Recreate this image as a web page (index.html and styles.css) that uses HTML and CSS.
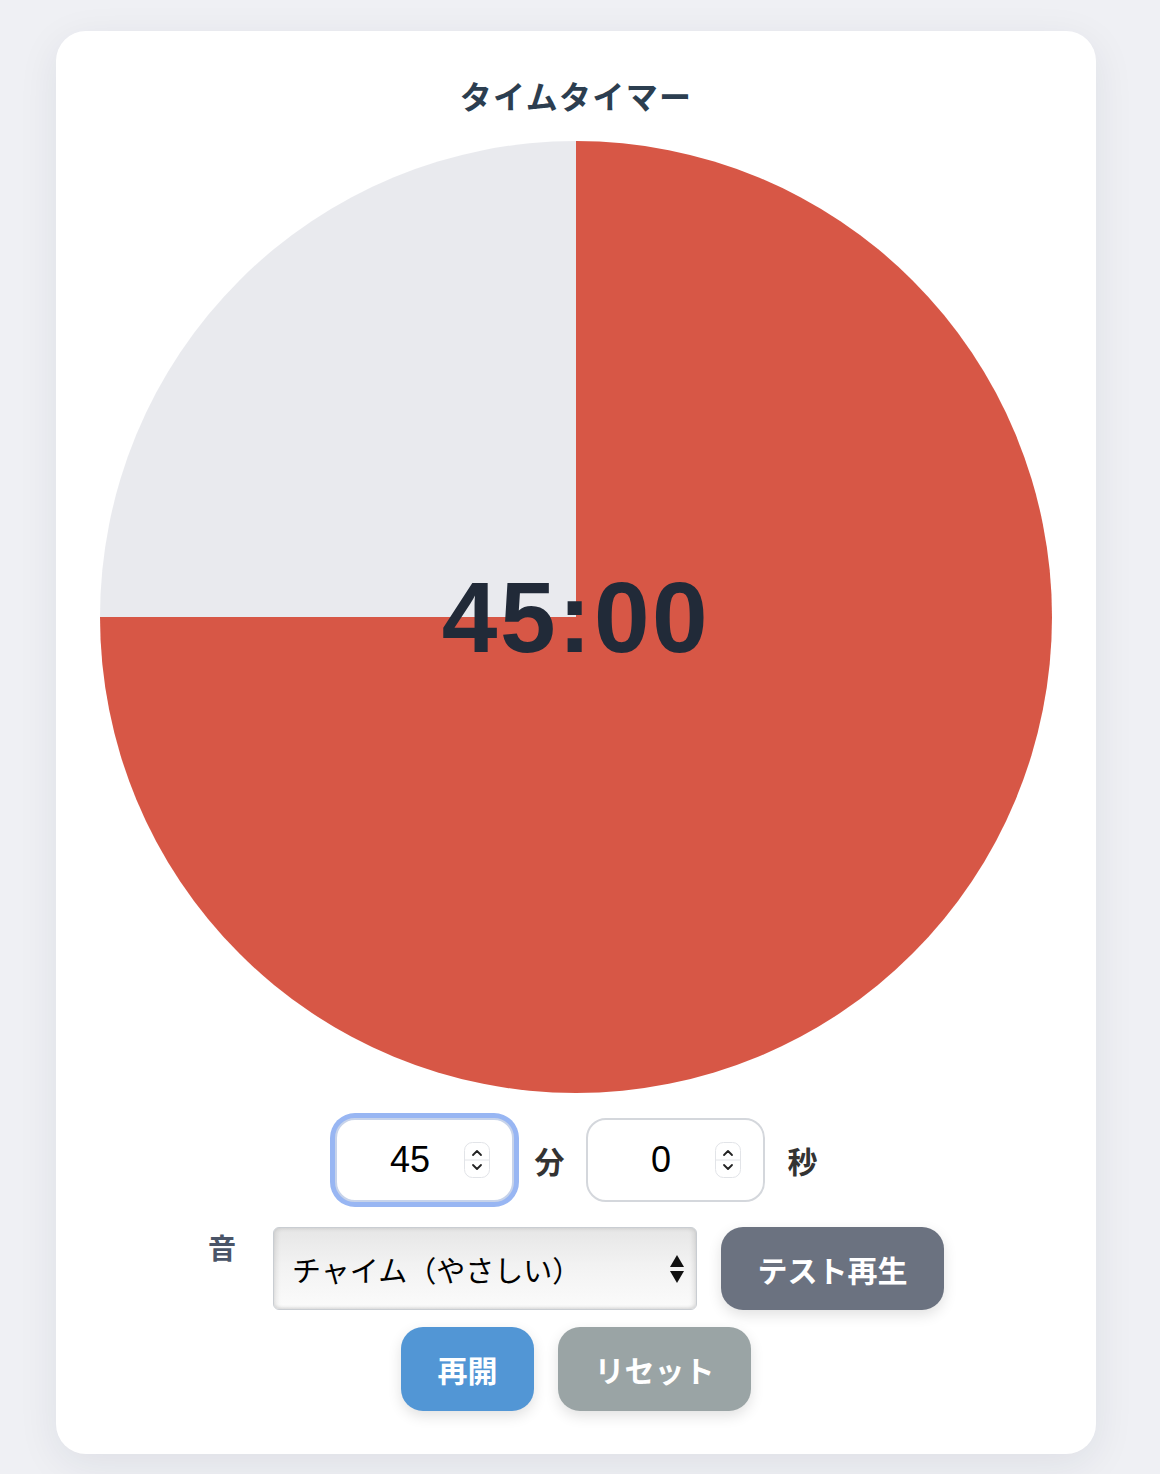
FILE: index.html
```html
<!DOCTYPE html>
<html lang="ja">
<head>
    <meta charset="UTF-8">
    <meta name="viewport" content="width=device-width, initial-scale=1.0">
    <title>タイムタイマー</title>
    <link rel="stylesheet" href="styles.css">
</head>
<body>
    <div class="card">
        <h1 class="title">タイムタイマー</h1>

        <div class="dial">
            <span class="time">45:00</span>
        </div>

        <div class="time-row">
            <span class="num-wrap">
                <input type="number" class="num focused" value="45" min="0" max="60">
                <svg class="spin" width="26" height="36" viewBox="0 0 26 36">
                    <rect x="0.5" y="0.5" width="25" height="35" rx="8" fill="#fff" stroke="#e2e4e8"/>
                    <line x1="1" y1="18" x2="25" y2="18" stroke="#e2e4e8"/>
                    <path d="M9 13 L13 9 L17 13" fill="none" stroke="#222" stroke-width="1.8" stroke-linecap="round" stroke-linejoin="round"/>
                    <path d="M9 23 L13 27 L17 23" fill="none" stroke="#222" stroke-width="1.8" stroke-linecap="round" stroke-linejoin="round"/>
                </svg>
            </span>
            <span class="unit">分</span>
            <span class="num-wrap">
                <input type="number" class="num" value="0" min="0" max="59">
                <svg class="spin" width="26" height="36" viewBox="0 0 26 36">
                    <rect x="0.5" y="0.5" width="25" height="35" rx="8" fill="#fff" stroke="#e2e4e8"/>
                    <line x1="1" y1="18" x2="25" y2="18" stroke="#e2e4e8"/>
                    <path d="M9 13 L13 9 L17 13" fill="none" stroke="#222" stroke-width="1.8" stroke-linecap="round" stroke-linejoin="round"/>
                    <path d="M9 23 L13 27 L17 23" fill="none" stroke="#222" stroke-width="1.8" stroke-linecap="round" stroke-linejoin="round"/>
                </svg>
            </span>
            <span class="unit unit-sec">秒</span>
        </div>

        <div class="sound-row">
            <label class="sound-label" for="sound">音</label>
            <span class="select-wrap">
                <select id="sound" class="sound-select">
                    <option>チャイム（やさしい）</option>
                    <option>ベル</option>
                    <option>アラーム</option>
                </select>
                <svg class="select-arrows" width="16" height="30" viewBox="0 0 16 30">
                    <path d="M8 1 L15 13 L1 13 Z" fill="#111"/>
                    <path d="M1 17 L15 17 L8 29 Z" fill="#111"/>
                </svg>
            </span>
            <button class="btn btn-test">テスト再生</button>
        </div>

        <div class="control-row">
            <button class="btn btn-start">再開</button>
            <button class="btn btn-reset">リセット</button>
        </div>
    </div>
</body>
</html>
```

FILE: styles.css
```css
body {
    font-family: "Noto Sans CJK JP", "Liberation Sans", sans-serif;
    background-color: #eff0f4;
    margin: 0;
    padding: 31px 0 20px;
}

.card {
    width: 1040px;
    box-sizing: border-box;
    margin-left: 56px;
    padding: 42px 44px 43px;
    background-color: #ffffff;
    border-radius: 30px;
    box-shadow: 0 10px 40px rgba(30, 40, 70, 0.08);
}

.title {
    margin: 0 0 24px;
    font-size: 32px;
    line-height: 44px;
    font-weight: 700;
    color: #2c3e50;
    text-align: center;
    letter-spacing: 1.3px;
}

.dial {
    width: 952px;
    height: 952px;
    border-radius: 50%;
    background: conic-gradient(#d75746 0 75%, #e9eaee 75% 100%);
    display: flex;
    align-items: center;
    justify-content: center;
}

.time {
    font-family: "Liberation Sans", Arial, sans-serif;
    font-size: 100px;
    font-weight: 700;
    letter-spacing: 2.5px;
    color: #212a38;
    line-height: 1;
}

.time-row {
    display: flex;
    align-items: center;
    justify-content: center;
    gap: 21px;
    margin-top: 25px;
}

.num-wrap {
    position: relative;
    display: inline-block;
}

.num {
    width: 179px;
    height: 84px;
    box-sizing: border-box;
    border: 2px solid #d4d7dc;
    border-radius: 20px;
    padding: 0 36px 0 8px;
    font-family: "Liberation Sans", Arial, sans-serif;
    font-size: 36px;
    color: #000;
    text-align: center;
    background: #fff;
    -moz-appearance: textfield;
    outline: none;
}

.num::-webkit-inner-spin-button,
.num::-webkit-outer-spin-button {
    -webkit-appearance: none;
    margin: 0;
}

.num.focused {
    border-color: #c7d3ea;
    box-shadow: 0 0 0 5px #98b6f3;
}

.spin {
    position: absolute;
    right: 24px;
    top: 24px;
}

.unit {
    font-size: 30px;
    font-weight: 700;
    color: #333;
}

.unit-sec {
    margin-left: 2px;
}

.sound-row {
    display: flex;
    align-items: flex-start;
    justify-content: center;
    gap: 24px;
    margin-top: 25px;
}

.sound-label {
    font-size: 28px;
    font-weight: 700;
    line-height: 40px;
    color: #4a5568;
    margin-right: 13px;
}

.select-wrap {
    position: relative;
    display: inline-block;
}

.sound-select {
    -webkit-appearance: none;
    appearance: none;
    width: 424px;
    height: 83px;
    box-sizing: border-box;
    padding: 0 50px 0 18px;
    border: 1px solid #c9cdd2;
    border-radius: 6px;
    font-family: "Noto Sans CJK JP", sans-serif;
    font-size: 29px;
    color: #000;
    background: linear-gradient(#e6e6e6, #f2f2f2 45%, #fbfbfb);
    box-shadow: inset 3px 0 4px rgba(0, 0, 0, 0.08), inset -3px 0 4px rgba(0, 0, 0, 0.08), inset 0 -2px 3px rgba(0, 0, 0, 0.05);
}

.select-arrows {
    position: absolute;
    right: 12px;
    top: 27px;
    pointer-events: none;
}

.btn {
    border: none;
    height: 84px;
    padding: 0;
    border-radius: 22px;
    font-family: "Noto Sans CJK JP", sans-serif;
    font-size: 30px;
    font-weight: 700;
    color: #fff;
    cursor: pointer;
    box-shadow: 0 5px 14px rgba(0, 0, 0, 0.12);
}

.btn-test {
    height: 83px;
    width: 223px;
    background-color: #6b7280;
}

.control-row {
    display: flex;
    justify-content: center;
    gap: 24px;
    margin-top: 17px;
}

.btn-start {
    width: 133px;
    background-color: #5296d5;
}

.btn-reset {
    width: 193px;
    background-color: #9aa4a5;
}
```
